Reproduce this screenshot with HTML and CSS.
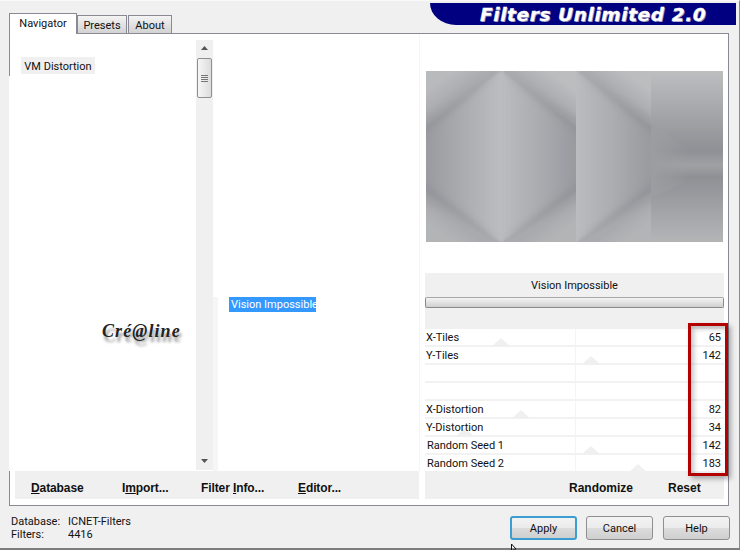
FILE: index.html
```html
<!DOCTYPE html>
<html lang="en">
<head>
<meta charset="utf-8">
<title>Filters Unlimited 2.0</title>
<link rel="stylesheet" href="styles.css">
</head>
<body>
<div class="window">
  <header class="header">
    <nav class="tabs">
      <div class="tab tab-active">Navigator</div>
      <div class="tab tab-presets">Presets</div>
      <div class="tab tab-about">About</div>
    </nav>
    <div class="banner"><span class="banner-text">Filters Unlimited 2.0</span></div>
  </header>

  <section class="panel">
    <div class="main">
      <div class="list-cats">
        <div class="cat">VM Distortion</div>
        <div class="logo">Cré@line</div>
      </div>
      <div class="scrollbar">
        <svg class="arrow" width="9" height="5" viewBox="0 0 9 5"><path d="M4.5 0 8 4H1z" fill="#555"/></svg>
        <div class="thumb"><span></span><span></span><span></span><span></span></div>
        <div class="track"></div>
        <svg class="arrow" width="9" height="5" viewBox="0 0 9 5"><path d="M1 1h7L4.5 5z" fill="#555"/></svg>
      </div>
      <div class="gutter"></div>
      <div class="list-filters">
        <div class="filter-sel">Vision Impossible</div>
      </div>
      <div class="controls">
        <svg class="preview" width="297" height="171" viewBox="0 0 297 171">
          <defs>
            <linearGradient id="hL" gradientUnits="userSpaceOnUse" x1="0" y1="0" x2="75" y2="0">
              <stop offset="0" stop-color="#9a9ba0"/><stop offset=".5" stop-color="#abacaf"/><stop offset="1" stop-color="#bcbdc0"/>
            </linearGradient>
            <linearGradient id="hR" gradientUnits="userSpaceOnUse" x1="75" y1="0" x2="150" y2="0">
              <stop offset="0" stop-color="#bbbcbf"/><stop offset=".5" stop-color="#abacb0"/><stop offset="1" stop-color="#999a9f"/>
            </linearGradient>
            <linearGradient id="tl" gradientUnits="userSpaceOnUse" x1="18" y1="6" x2="42" y2="40">
              <stop offset="0" stop-color="#b9babc"/><stop offset="1" stop-color="#9c9da1"/>
            </linearGradient>
            <linearGradient id="tr" gradientUnits="userSpaceOnUse" x1="132" y1="6" x2="108" y2="40">
              <stop offset="0" stop-color="#bcbdbf"/><stop offset="1" stop-color="#9c9da1"/>
            </linearGradient>
            <linearGradient id="bl" gradientUnits="userSpaceOnUse" x1="18" y1="165" x2="42" y2="131">
              <stop offset="0" stop-color="#b3b4b6"/><stop offset="1" stop-color="#9c9da1"/>
            </linearGradient>
            <linearGradient id="br" gradientUnits="userSpaceOnUse" x1="132" y1="165" x2="108" y2="131">
              <stop offset="0" stop-color="#b3b4b6"/><stop offset="1" stop-color="#9c9da1"/>
            </linearGradient>
            <linearGradient id="v3" x1="0" y1="0" x2="0" y2="1">
              <stop offset="0" stop-color="#bdbec0"/><stop offset=".47" stop-color="#8f9095"/><stop offset=".55" stop-color="#a0a1a5"/><stop offset=".62" stop-color="#8f9095"/><stop offset="1" stop-color="#b4b5b7"/>
            </linearGradient>
            <linearGradient id="fade" x1="0" y1="0" x2="1" y2="0">
              <stop offset="0" stop-color="#9c9da1"/><stop offset="1" stop-color="#9c9da1" stop-opacity="0"/>
            </linearGradient>
            <filter id="soft" x="-10%" y="-10%" width="120%" height="120%"><feGaussianBlur stdDeviation="1"/></filter>
            <filter id="softer" x="-20%" y="-20%" width="140%" height="140%"><feGaussianBlur stdDeviation="3"/></filter>
            <clipPath id="tileclip"><rect width="150" height="171"/></clipPath>
            <clipPath id="halfclip"><rect width="75" height="171"/></clipPath>
            <g id="tile" clip-path="url(#tileclip)">
              <rect width="150" height="171" fill="#abacaf"/>
              <g filter="url(#soft)">
                <path d="M-10 -10H75L-10 55z" fill="url(#tl)"/>
                <path d="M160 -10H75L160 55z" fill="url(#tr)"/>
                <path d="M-10 181H75L-10 122z" fill="url(#bl)"/>
                <path d="M160 181H75L160 122z" fill="url(#br)"/>
                <path d="M75 0 -10 62V115L75 171z" fill="url(#hL)"/>
                <path d="M75 0 160 62V115L75 171z" fill="url(#hR)"/>
              </g>
              <g fill="#8e8f95" opacity=".5" filter="url(#softer)">
                <path d="M75 0-5 50V66z"/>
                <path d="M75 0 155 50V66z"/>
                <path d="M75 171-5 127V108z"/>
                <path d="M75 171 155 127V108z"/>
              </g>
              <rect x="74" width="4" height="171" fill="#bdbec1" opacity=".35"/>
            </g>
          </defs>
          <use href="#tile"/>
          <g clip-path="url(#halfclip)" transform="translate(150 0)"><use href="#tile" transform="translate(-75 0)"/></g>
          <rect x="225" width="72" height="171" fill="url(#v3)"/>
          <path d="M225 52 264 80V108L225 128z" fill="url(#fade)"/>
        </svg>
        <div class="title">Vision Impossible</div>
        <div class="progress"></div>
        <div class="progress-gap"></div>
        <div class="rows">
          <div class="row"><span>X-Tiles</span><span>65</span><i class="knob" style="left:76px"></i></div>
          <div class="row"><span>Y-Tiles</span><span>142</span><i class="knob" style="left:166px"></i></div>
          <div class="row"></div>
          <div class="row"></div>
          <div class="row"><span>X-Distortion</span><span>82</span><i class="knob" style="left:96px"></i></div>
          <div class="row"><span>Y-Distortion</span><span>34</span><i class="knob" style="left:40px"></i></div>
          <div class="row seed"><span>Random Seed 1</span><span>142</span><i class="knob" style="left:166px"></i></div>
          <div class="row seed"><span>Random Seed 2</span><span>183</span><i class="knob" style="left:213px"></i></div>
        </div>
      </div>
    </div>
    <div class="actions">
      <div class="actions-left">
        <span class="action"><u>D</u>atabase</span>
        <span class="action">I<u>m</u>port...</span>
        <span class="action">Filter <u>I</u>nfo...</span>
        <span class="action"><u>E</u>ditor...</span>
      </div>
      <div class="actions-right">
        <span class="action">Randomize</span>
        <span class="action">Reset</span>
      </div>
    </div>
  </section>

  <footer class="footer">
    <div class="status">
      <span>Database:</span><span>ICNET-Filters</span>
      <span>Filters:</span><span>4416</span>
    </div>
    <div class="buttons">
      <div class="btn btn-default">Apply</div>
      <div class="btn">Cancel</div>
      <div class="btn">Help</div>
    </div>
  </footer>

  <div class="annotation"></div>
  <svg class="cursor" width="8" height="6" viewBox="0 0 8 6"><path d="M.5 0V6M.5 0 5 5H2" fill="#fff" stroke="#111" stroke-width="1"/></svg>
</div>
</body>
</html>
```
FILE: styles.css
```css
* { box-sizing: border-box; }
html, body { margin: 0; padding: 0; }
body {
  width: 740px;
  height: 550px;
  overflow: hidden;
  background: #f0f0f0;
  font-family: Roboto, "Liberation Sans", sans-serif;
  font-size: 11px;
  color: #111;
}
.window {
  position: relative;
  width: 740px;
  height: 550px;
  border-top: 1px solid #fafafa;
  border-right: 1px solid #8a8a8a;
  border-bottom: 2px solid #7d7d7d;
  padding-left: 9px;
  display: flex;
  flex-direction: column;
}
.header {
  height: 32px;
  display: flex;
  justify-content: space-between;
  flex-shrink: 0;
}
.tabs {
  display: flex;
  align-items: flex-end;
  position: relative;
  z-index: 2;
}
.tab {
  height: 18px;
  border: 1px solid #8a8a96;
  border-bottom: 0;
  background: linear-gradient(#f4f4f4, #d2d2d2);
  display: flex;
  align-items: center;
  justify-content: center;
  padding-top: 2px;
}
.tab-active {
  width: 68px;
  height: 21px;
  margin-bottom: -1px;
  background: #fff;
  padding-top: 0;
  padding-bottom: 2px;
}
.tab-presets { width: 50px; }
.tab-about { width: 44px; margin-left: 1px; }
.banner {
  margin-top: 2px;
  margin-right: 3px;
  width: 306px;
  height: 22px;
  background: #000080;
  border-bottom-left-radius: 26px 22px;
  padding-left: 50px;
  display: flex;
  align-items: center;
}
.banner-text {
  font-family: "DejaVu Sans", sans-serif;
  font-weight: bold;
  font-style: italic;
  font-size: 18.5px;
  letter-spacing: .6px;
  color: #fff;
  white-space: nowrap;
  -webkit-text-stroke: .3px #fff;
  text-shadow: 1px 1px 0 #8a8ab0;
}
.panel {
  width: 720px;
  height: 473px;
  background: #fff;
  border: 1px solid #8a8a96;
  flex-shrink: 0;
}
.main {
  height: 437px;
  display: flex;
}
.list-cats {
  position: relative;
  width: 186px;
  padding: 23px 0 0 11px;
  background: #fff;
}
.list-cats::before {
  content: "";
  position: absolute;
  left: -1px;
  top: 42px;
  bottom: 0;
  width: 1px;
  background: #fff;
}
.cat {
  width: 74px;
  height: 17px;
  background: #f0f0f0;
  text-align: center;
  padding-top: 1px;
  line-height: 18px;
  white-space: nowrap;
}
.logo {
  margin: 247px 0 0 81px;
  font-family: "Liberation Serif", serif;
  font-weight: bold;
  font-style: italic;
  font-size: 18px;
  letter-spacing: 1.1px;
  line-height: 20px;
  color: #222;
  white-space: nowrap;
  text-shadow: 2px 5px 3px rgba(0, 0, 0, .4);
}
.scrollbar {
  width: 17px;
  height: 430px;
  margin-top: 6px;
  background: #f0f0f0;
  display: flex;
  flex-direction: column;
  align-items: center;
  padding-top: 6px;
  padding-bottom: 7px;
}
.arrow { flex-shrink: 0; }
.thumb {
  width: 15px;
  height: 40px;
  margin-top: 7px;
  border: 1px solid #8f8f8f;
  border-radius: 2px;
  background: linear-gradient(90deg, #f6f6f6, #dcdcdc);
  display: flex;
  flex-direction: column;
  align-items: center;
  justify-content: center;
  gap: 1px;
}
.thumb span {
  width: 7px;
  height: 1px;
  background: #777;
}
.track { flex: 1; }
.gutter {
  width: 5px;
  background: linear-gradient(#fff 263px, #f6f6f6 263px);
}
.list-filters {
  width: 202px;
  padding: 263px 0 0 11px;
  background: #fff;
  border-right: 1px solid #f6f6f6;
}
.filter-sel {
  width: 87px;
  height: 15px;
  line-height: 15px;
  background: #3399ff;
  color: #fff;
  padding-left: 2px;
  white-space: nowrap;
}
.controls {
  width: 300px;
  padding-left: 5px;
  display: flex;
  flex-direction: column;
}
.preview {
  display: block;
  margin: 37px 0 0 1px;
  flex-shrink: 0;
}
.title {
  margin-top: 31px;
  height: 24px;
  width: 299px;
  background: #f0f0f0;
  text-align: center;
  padding-top: 1px;
  line-height: 24px;
  flex-shrink: 0;
}
.progress {
  width: 299px;
  height: 11px;
  border: 1px solid #8a8a8a;
  border-top-color: #a8a8a8;
  border-radius: 2px;
  background: linear-gradient(#f4f4f4, #cfcfcf);
  flex-shrink: 0;
}
.progress-gap {
  width: 299px;
  height: 21px;
  background: #f0f0f0;
  flex-shrink: 0;
}
.rows {
  width: 299px;
  height: 142px;
  overflow: hidden;
  flex-shrink: 0;
}
.row {
  position: relative;
  height: 18px;
  padding: 0 3px 2px 1px;
  display: flex;
  justify-content: space-between;
  align-items: center;
  background:
    linear-gradient(#f2f2f2, #f2f2f2) 0 16px / 100% 2px no-repeat,
    linear-gradient(#f4f4f4, #f4f4f4) 150px 0 / 1px 100% no-repeat,
    #fff;
  white-space: nowrap;
}
.row span { position: relative; z-index: 1; }
.seed { padding-left: 2px; }
.knob {
  position: absolute;
  bottom: 0;
  width: 0;
  height: 0;
  margin-left: -10px;
  border-left: 10px solid transparent;
  border-right: 10px solid transparent;
  border-bottom: 9px solid #f0f0f0;
}
.actions {
  height: 28px;
  display: flex;
  padding-left: 5px;
  gap: 6px;
  font-family: "Liberation Sans", Arial, sans-serif;
  font-size: 12px;
  font-weight: bold;
}
.action { white-space: nowrap; }
.actions-left {
  width: 404px;
  background: #f0f0f0;
  padding: 6px 0 0 16px;
  display: grid;
  grid-template-columns: 91px 79px 97px auto;
  align-items: center;
  letter-spacing: -.1px;
}
.actions-right {
  width: 299px;
  background: #f0f0f0;
  padding: 6px 0 0 144px;
  display: grid;
  grid-template-columns: 99px auto;
  align-items: center;
}
.footer {
  flex: 1;
  display: flex;
  justify-content: space-between;
  padding: 0 9px 0 2px;
}
.status {
  display: grid;
  grid-template-columns: 57px auto;
  grid-auto-rows: 13px;
  align-content: start;
  margin-top: 9px;
}
.buttons {
  display: flex;
  gap: 10px;
  margin-top: 10px;
}
.btn {
  width: 67px;
  height: 24px;
  border: 1px solid #8e8f8f;
  border-radius: 3px;
  background: linear-gradient(#f3f3f3 0%, #ebebeb 50%, #dcdcdc 52%, #cfcfcf 100%);
  text-align: center;
  padding-top: 1px;
  line-height: 22px;
}
.btn-default {
  border: 2px solid #3c9dd0;
  line-height: 20px;
  margin-right: -1px;
}
.annotation {
  position: absolute;
  left: 688px;
  top: 322px;
  width: 40px;
  height: 153px;
  border: 3px solid #b30000;
  box-shadow: 3px 3px 5px rgba(0, 0, 0, .3), inset 3px 3px 5px rgba(0, 0, 0, .22);
}
.cursor {
  position: absolute;
  left: 511px;
  top: 543px;
}
```
